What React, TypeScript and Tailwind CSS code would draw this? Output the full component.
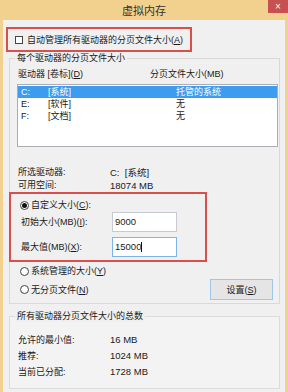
const drives = [
  { d: "C:", label: "[系统]", size: "托管的系统", selected: true },
  { d: "E:", label: "[软件]", size: "无", selected: false },
  { d: "F:", label: "[文档]", size: "无", selected: false },
];

const totals = [
  { k: "允许的最小值:", v: "16 MB" },
  { k: "推荐:", v: "1024 MB" },
  { k: "当前已分配:", v: "1728 MB" },
];

function Radio({ on }: { on?: boolean }) {
  return (
    <span className="w-[9px] h-[9px] rounded-full border border-[#444] bg-white flex items-center justify-center shrink-0">
      {on && <span className="w-[5px] h-[5px] rounded-full bg-[#111]" />}
    </span>
  );
}

export default function App() {
  return (
    <div className="w-[288px] h-[392px] flex flex-col overflow-hidden bg-[#f2d18e] text-[9px] leading-[12px] text-[#1a1a1a] font-['Liberation_Sans','Noto_Sans_CJK_SC',sans-serif]">
      {/* Title bar */}
      <div className="h-[20px] shrink-0 flex items-start relative">
        <div className="flex-1 h-[20px] flex items-center justify-center text-[11px] text-[#333] font-['Noto_Sans_CJK_SC',sans-serif]">
          虚拟内存
        </div>
        <div className="absolute right-0 top-0 w-[20px] h-[13px] bg-[#c75050] flex items-center justify-center text-white text-[10px] leading-none">
          ×
        </div>
      </div>

      {/* Body */}
      <div className="flex-1 mx-[3px] bg-[#f0f0f0] flex flex-col">
        {/* Auto manage */}
        <div className="mt-[7px] ml-[3px] w-[186px] h-[25px] border-2 border-[#d8504c] flex items-center pl-[7px] gap-[4px]">
          <span className="w-[8px] h-[8px] border border-[#444] bg-white shrink-0" />
          <span>
            自动管理所有驱动器的分页文件大小(<u>A</u>)
          </span>
        </div>

        {/* Per-drive group */}
        <fieldset className="ml-[6px] w-[271px] border border-[#d9d9d9] pb-[3px]">
          <legend className="ml-[5px] px-[2px] leading-[12px]">每个驱动器的分页文件大小</legend>

          <div className="mt-[4px] pl-[8px] flex">
            <span className="w-[132px]">
              驱动器 [卷标](<u>D</u>)
            </span>
            <span>分页文件大小(MB)</span>
          </div>

          <div className="mt-[4px] ml-[7px] w-[261px] h-[63px] bg-white border border-[#abadb3] pt-[1px]">
            {drives.map((r) => (
              <div
                key={r.d}
                className={`h-[12px] flex items-center pl-[3px] ${r.selected ? "bg-[#3d9bf0] text-white" : ""}`}
              >
                <span className="w-[27px]">{r.d}</span>
                <span className="w-[128px]">{r.label}</span>
                <span>{r.size}</span>
              </div>
            ))}
          </div>

          <div className="mt-[19px] pl-[8px] flex leading-[13px]">
            <span className="w-[92px]">所选驱动器:</span>
            <span className="text-[9.5px]">C:&nbsp; [系统]</span>
          </div>
          <div className="pl-[8px] flex leading-[13px]">
            <span className="w-[92px]">可用空间:</span>
            <span className="text-[9.5px]">18074 MB</span>
          </div>

          {/* Custom size */}
          <div className="-ml-[1px] w-[198px] h-[70px] border-2 border-[#d8504c] pt-[5px] pl-[9px] flex flex-col">
            <div className="h-[12px] flex items-center gap-[2px]">
              <Radio on />
              <span>
                自定义大小(<u>C</u>):
              </span>
            </div>
            <div className="mt-[1px] pl-[1px] flex items-center">
              <span className="w-[91px]">
                初始大小(MB)(<u>I</u>):
              </span>
              <div className="w-[65px] h-[20px] bg-white border border-[#c5cad3] flex items-center pl-[2px] text-[9.5px]">
                9000
              </div>
            </div>
            <div className="mt-[5px] pl-[1px] flex items-center">
              <span className="w-[91px]">
                最大值(MB)(<u>X</u>):
              </span>
              <div className="w-[65px] h-[20px] bg-white border border-[#7eb4ea] flex items-center pl-[2px] text-[9.5px]">
                15000
                <span className="w-px h-[10px] bg-[#111]" />
              </div>
            </div>
          </div>

          <div className="mt-[3px] pl-[10px] h-[12px] flex items-center gap-[2px]">
            <Radio />
            <span>
              系统管理的大小(<u>Y</u>)
            </span>
          </div>
          <div className="mt-[2px] pl-[10px] h-[21px] flex items-center gap-[2px]">
            <Radio />
            <span>
              无分页文件(<u>N</u>)
            </span>
            <div className="ml-auto mr-[6px] w-[63px] h-[21px] border border-[#9ec5ea] bg-[#e5e5e5] flex items-center justify-center">
              设置(<u>S</u>)
            </div>
          </div>
        </fieldset>

        {/* Totals group */}
        <fieldset className="mt-[6px] ml-[6px] w-[271px] border border-[#dcdcdc] bg-[#f3f3f3] pt-[10px] pb-[8px]">
          <legend className="ml-[5px] px-[2px] leading-[12px] bg-[#f0f0f0]">所有驱动器分页文件大小的总数</legend>
          {totals.map((t) => (
            <div key={t.k} className="h-[16px] pl-[8px] flex items-center">
              <span className="w-[92px]">{t.k}</span>
              <span className="text-[9.5px]">{t.v}</span>
            </div>
          ))}
        </fieldset>
      </div>
    </div>
  );
}
